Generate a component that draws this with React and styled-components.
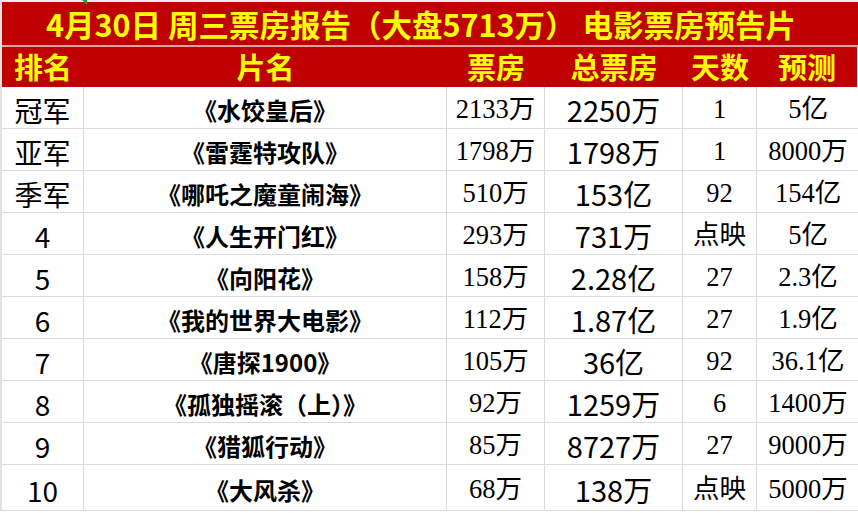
import React from "react";
import styled, { createGlobalStyle } from "styled-components";

const GlobalStyle = createGlobalStyle`
  html, body {
    margin: 0;
    padding: 0;
    background: #ffffff;
  }
`;

const SANS = `"Noto Sans CJK SC", "Liberation Sans", sans-serif`;
const SERIF = `"Liberation Serif", "Noto Sans CJK SC", serif`;

const rows = [
  ["冠军", "《水饺皇后》", "2133万", "2250万", "1", "5亿"],
  ["亚军", "《雷霆特攻队》", "1798万", "1798万", "1", "8000万"],
  ["季军", "《哪吒之魔童闹海》", "510万", "153亿", "92", "154亿"],
  ["4", "《人生开门红》", "293万", "731万", "点映", "5亿"],
  ["5", "《向阳花》", "158万", "2.28亿", "27", "2.3亿"],
  ["6", "《我的世界大电影》", "112万", "1.87亿", "27", "1.9亿"],
  ["7", "《唐探1900》", "105万", "36亿", "92", "36.1亿"],
  ["8", "《孤独摇滚（上）》", "92万", "1259万", "6", "1400万"],
  ["9", "《猎狐行动》", "85万", "8727万", "27", "9000万"],
  ["10", "《大风杀》", "68万", "138万", "点映", "5000万"],
];

const Sheet = styled.div`
  display: grid;
  grid-template-columns: 82px 363px 98px 138px 74px 103px;
  grid-template-rows: 47px 40px repeat(9, 42px) 46px;
  width: 858px;
  border-left: 2px solid #e2e2e2;
  box-sizing: border-box;
`;

const Title = styled.div`
  grid-column: 1 / -1;
  position: relative;
  display: flex;
  align-items: center;
  justify-content: center;
  padding-right: 20px;
  background: #c00000;
  border-top: 2px solid #eeeeee;
  border-bottom: 2px solid #e8a2a2;
  color: #ffff00;
  font-family: ${SANS};
  font-weight: 700;
  font-size: 30.5px;
  white-space: pre;
`;

const Flag = styled.span`
  position: absolute;
  left: 80px;
  top: -2px;
  width: 0;
  height: 0;
  border-top: 5px solid #1e9e3e;
  border-left: 5px solid transparent;
`;

const Head = styled.div`
  display: flex;
  align-items: center;
  justify-content: center;
  background: #c00000;
  color: #ffff00;
  font-family: ${SANS};
  font-weight: 700;
  font-size: 29px;
  line-height: 1;
  padding-bottom: 2px;
  border-right: ${(p) => (p.$last ? "3px solid #f4f4f4" : "none")};
`;

const Cell = styled.div`
  display: flex;
  align-items: center;
  justify-content: center;
  border-right: 1px solid #dadada;
  border-bottom: 1px solid #dadada;
  color: #000;
  line-height: 1;
  white-space: nowrap;
  font-family: ${(p) => (p.$serif ? SERIF : SANS)};
  font-size: ${(p) => p.$size}px;
  font-weight: ${(p) => (p.$bold ? 700 : 400)};
  padding-top: 4px;
`;

const headers = ["排名", "片名", "票房", "总票房", "天数", "预测"];

export default function App() {
  return (
    <>
      <GlobalStyle />
      <Sheet>
        <Title>
          <Flag />
          4月30日 周三票房报告（大盘5713万） 电影票房预告片
        </Title>
        {headers.map((h, i) => (
          <Head key={h} $last={i === headers.length - 1}>
            {h}
          </Head>
        ))}
        {rows.map((r) => (
          <React.Fragment key={r[1]}>
            <Cell $size={28}>{r[0]}</Cell>
            <Cell $size={24} $bold>
              {r[1]}
            </Cell>
            <Cell $size={26.5} $serif>
              {r[2]}
            </Cell>
            <Cell $size={29}>{r[3]}</Cell>
            <Cell $size={26.5} $serif>
              {r[4]}
            </Cell>
            <Cell $size={26.5} $serif>
              {r[5]}
            </Cell>
          </React.Fragment>
        ))}
      </Sheet>
    </>
  );
}
